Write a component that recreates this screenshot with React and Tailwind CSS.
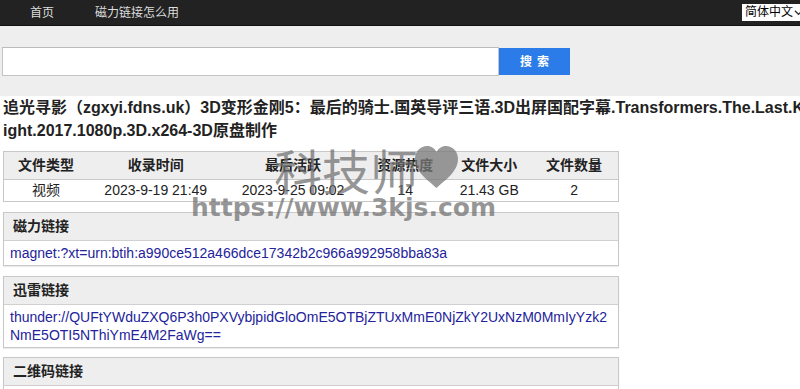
export default function App() {
  const cols = [
    { h: "文件类型", d: "视频", w: "w-[84px]" },
    { h: "收录时间", d: "2023-9-19 21:49", w: "w-[136px]" },
    { h: "最后活跃", d: "2023-9-25 09:02", w: "w-[139px]" },
    { h: "资源热度", d: "14", w: "w-[86px]" },
    { h: "文件大小", d: "21.43 GB", w: "w-[82px]" },
    { h: "文件数量", d: "2", w: "w-[88px]" },
  ];
  return (
    <div className="relative w-[800px] h-[389px] overflow-hidden bg-white font-['Liberation_Sans','Noto_Sans_CJK_SC',sans-serif] text-[#222]">
      {/* nav */}
      <div className="h-[26px] bg-[#222] border-b border-[#111] flex items-center text-[12px] text-[#ddd]">
        <span className="ml-[30px]">首页</span>
        <span className="ml-[41px]">磁力链接怎么用</span>
        <div className="ml-auto mr-[-20px] w-[78px] h-[17px] bg-white text-black text-[12px] leading-[15px] flex items-center pl-[3px] gap-[1px]">
          <span>简体中文</span>
          <svg width="9" height="9" viewBox="0 0 10 10" className="shrink-0">
            <path d="M1 3 L5 7 L9 3" fill="none" stroke="#333" strokeWidth="1.4" />
          </svg>
        </div>
      </div>
      {/* search */}
      <div className="h-[70px] bg-[#eee] flex items-start pt-[21px] pl-[2px]">
        <div className="w-[497px] h-[29px] bg-white border border-[#c4c4c4] border-t-[#bbb]"></div>
        <div className="w-[71px] h-[27px] mt-[1px] bg-[#2b7ce9] text-white text-[12px] font-bold flex items-center justify-center tracking-[5px] pl-[5px]">
          搜索
        </div>
      </div>
      {/* title */}
      <div className="px-[3px] font-bold text-[16px] leading-[23px] text-[#222]">
        <div className="whitespace-nowrap">追光寻影（zgxyi.fdns.uk）3D变形金刚5：最后的骑士.国英导评三语.3D出屏国配字幕.Transformers.The.Last.Kn</div>
        <div className="whitespace-nowrap">ight.2017.1080p.3D.x264-3D原盘制作</div>
      </div>
      {/* table */}
      <div className="ml-[3px] mt-[9px] w-[616px] border border-[#c8c8c8] text-[14px]">
        <div className="flex h-[28px] bg-[#eee] font-bold border-b border-[#c8c8c8]">
          {cols.map((c) => (
            <div key={c.h} className={`${c.w} flex items-center justify-center`}>{c.h}</div>
          ))}
        </div>
        <div className="flex h-[21px]">
          {cols.map((c) => (
            <div key={c.h} className={`${c.w} flex items-center justify-center`}>{c.d}</div>
          ))}
        </div>
      </div>
      {/* panels */}
      <Panel title="磁力链接" top="mt-[10px]">
        <div className="whitespace-nowrap">magnet:?xt=urn:btih:a990ce512a466dce17342b2c966a992958bba83a</div>
      </Panel>
      <Panel title="迅雷链接" top="mt-[10px]">
        <div className="whitespace-nowrap">thunder://QUFtYWduZXQ6P3h0PXVybjpidGloOmE5OTBjZTUxMmE0NjZkY2UxNzM0MmIyYzk2</div>
        <div className="whitespace-nowrap">NmE5OTI5NThiYmE4M2FaWg==</div>
      </Panel>
      <Panel title="二维码链接" top="mt-[9px]">
        <div className="h-[18px]"></div>
      </Panel>

      {/* watermark */}
      <div className="absolute left-[274px] top-[141px] text-[48px] leading-[56px] text-[rgba(110,110,110,0.72)] font-['Noto_Sans_CJK_SC',sans-serif] pointer-events-none">
        科技师
      </div>
      <svg className="absolute left-[413px] top-[145px] pointer-events-none" width="47" height="44" viewBox="0 0 47 44">
        <path
          d="M23.5 43 C16 36 2 27 2 14 C2 6 8 1 14 1 C18.5 1 21.5 3.5 23.5 7 C25.5 3.5 28.5 1 33 1 C39 1 45 6 45 14 C45 27 31 36 23.5 43 Z"
          fill="rgba(120,120,120,0.75)"
        />
      </svg>
      <div className="absolute left-[191px] top-[193px] text-[25px] leading-[30px] font-bold text-[rgba(110,110,110,0.72)] font-['DejaVu_Sans',sans-serif] pointer-events-none">
        https://www.3kjs.com
      </div>
    </div>
  );
}

function Panel({ title, top, children }) {
  return (
    <div className={`${top} ml-[3px] w-[616px] border border-[#c8c8c8] shadow-[0_1px_1px_rgba(0,0,0,0.08)]`}>
      <div className="h-[28px] bg-[#eee] border-b border-[#d0d0d0] pl-[9px] flex items-center font-bold text-[14px] text-[#222]">
        {title}
      </div>
      <div className="px-[6px] py-[3px] text-[14px] leading-[18px] text-[#23239b]">{children}</div>
    </div>
  );
}
